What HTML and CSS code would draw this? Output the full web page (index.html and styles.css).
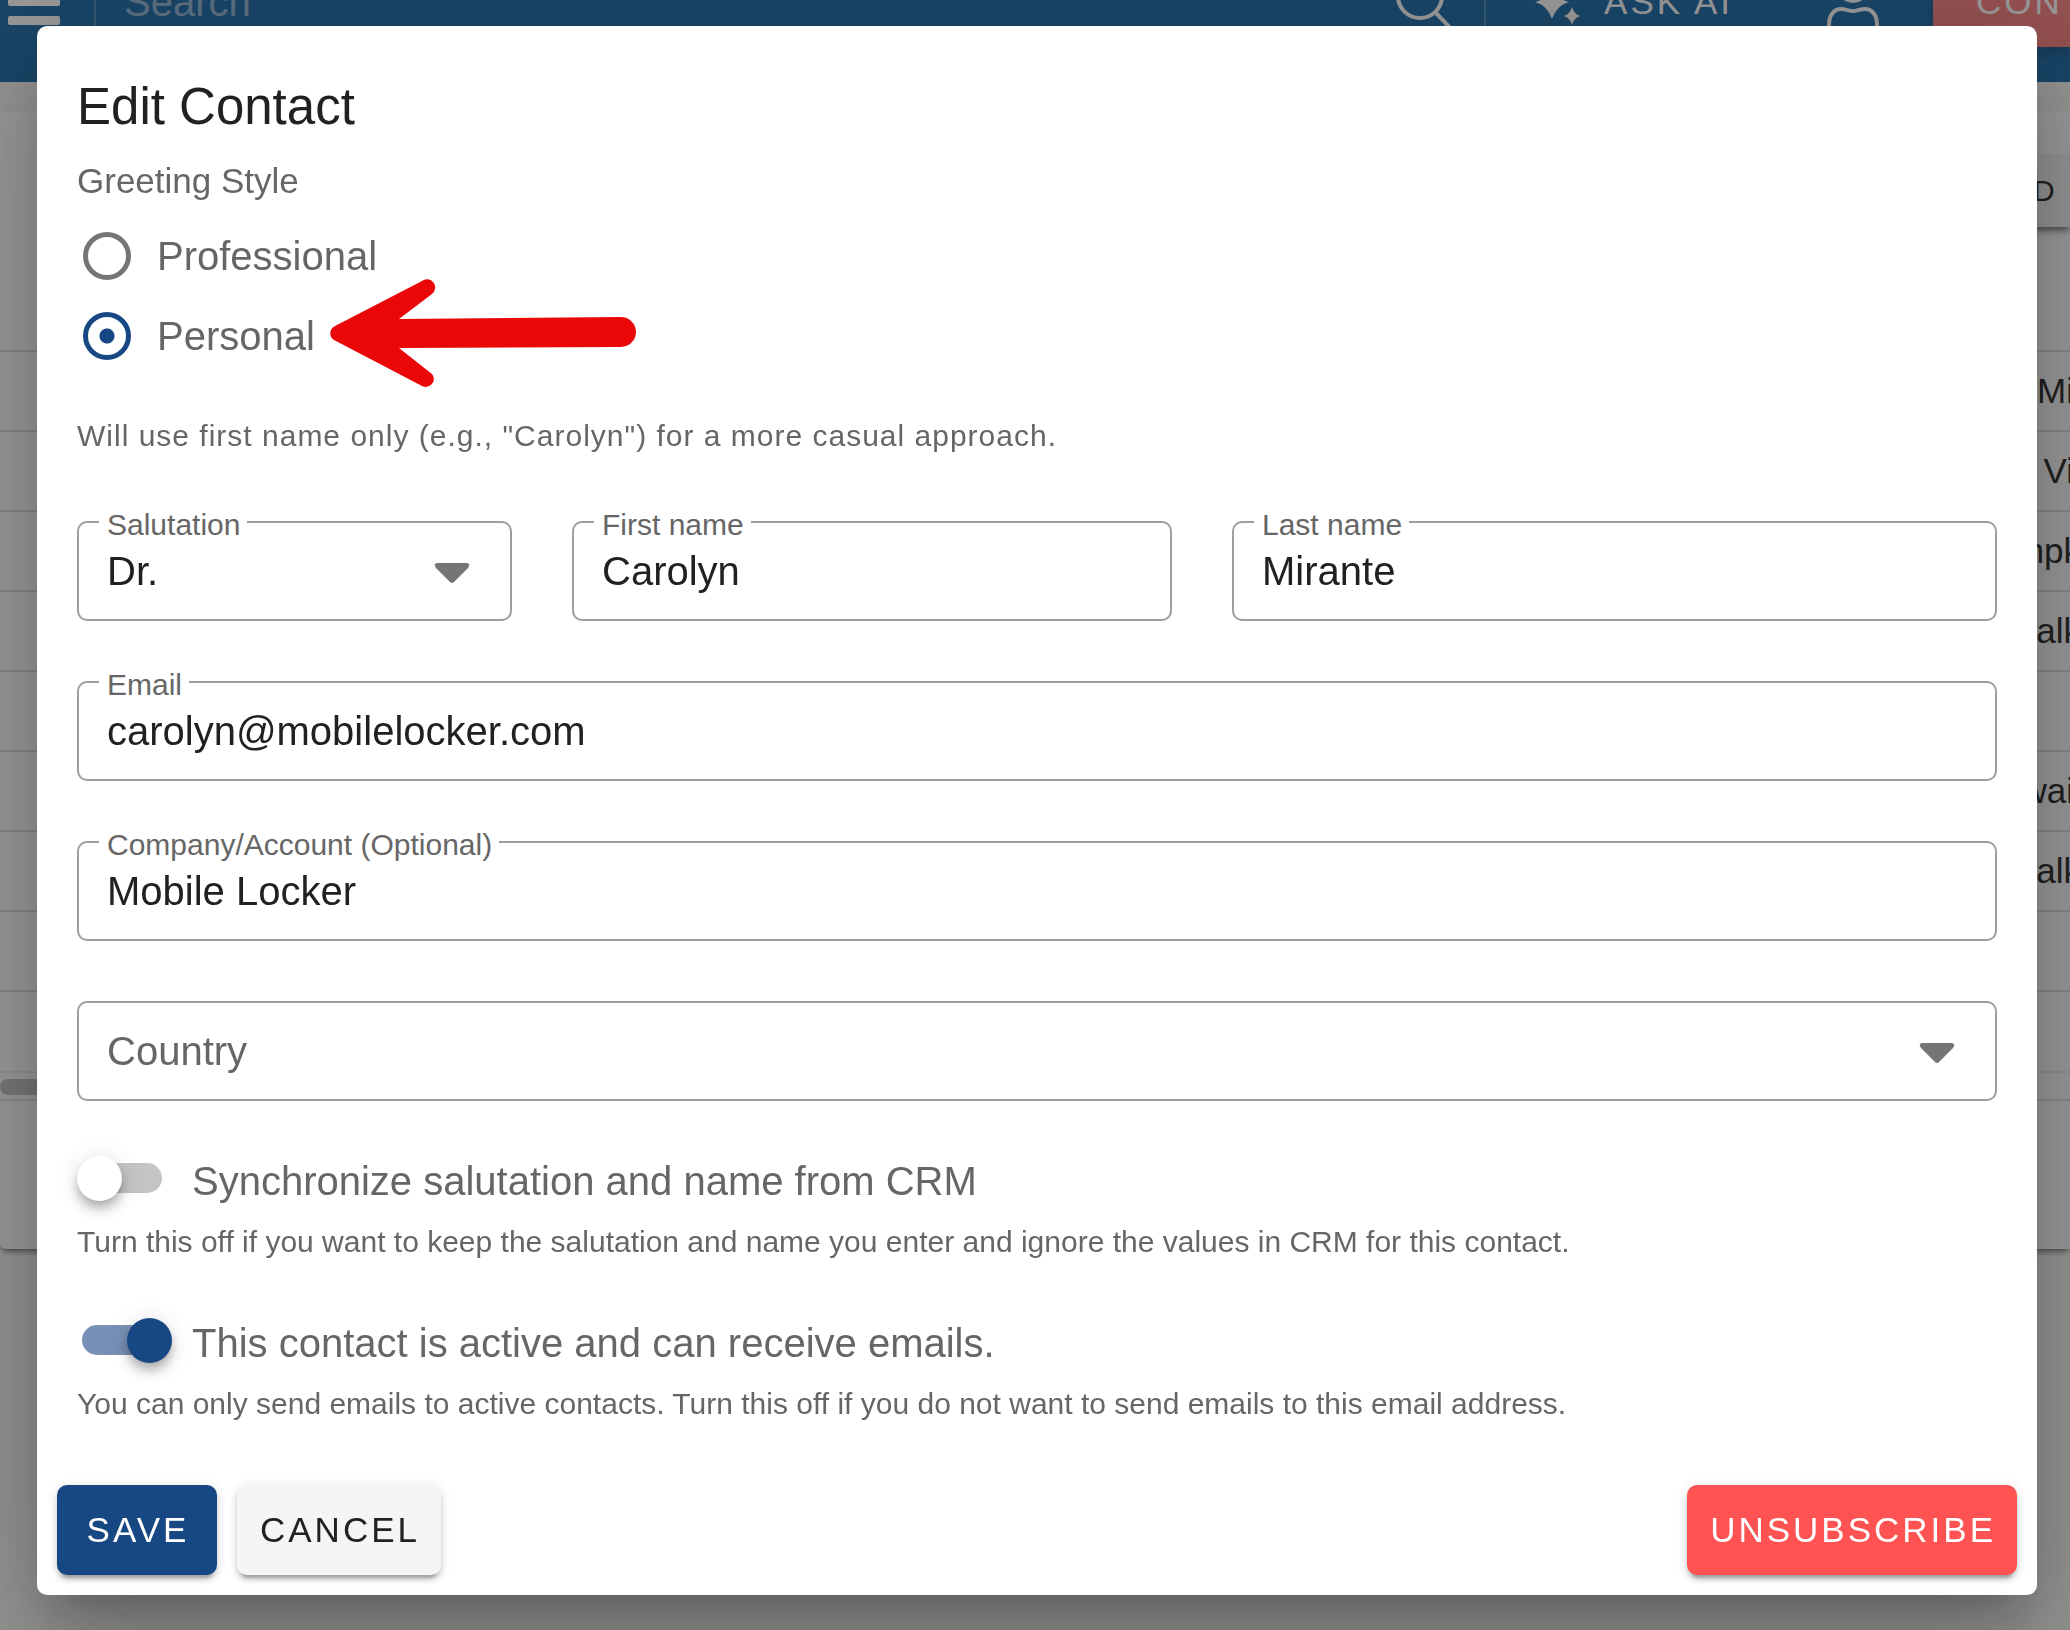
FILE: index.html
```html
<!DOCTYPE html>
<html lang="en">
<head>
<meta charset="utf-8">
<meta name="viewport" content="width=device-width, initial-scale=1">
<title>Edit Contact</title>
<link rel="stylesheet" href="styles.css">
</head>
<body>
<div class="app">
  <header class="topbar">
    <button class="topbar__menu" type="button" aria-label="Menu">
      <svg width="60" height="60" viewBox="0 0 60 60"><g fill="#fff"><rect x="4" y="6" width="52" height="8" rx="2"/><rect x="4" y="25" width="52" height="9" rx="2"/><rect x="4" y="44" width="52" height="9" rx="2"/></g></svg>
    </button>
    <span class="topbar__rule"></span>
    <input class="topbar__search" type="search" placeholder="Search" aria-label="Search">
    <svg class="topbar__lens" width="60" height="60" viewBox="0 0 60 60" fill="none" stroke="#fff" stroke-width="4"><circle cx="26" cy="24" r="22"/><path d="M42 41L62 62"/></svg>
    <span class="topbar__rule"></span>
    <button class="topbar__ask" type="button">
      <svg width="50" height="50" viewBox="0 0 50 50" fill="#fff"><path d="M18 8Q22 22 35 25Q22 29 18 42Q14 29 1 25Q14 22 18 8Z"/><path d="M38 30Q40 37 46 39Q40 41 38 48Q36 41 30 39Q36 37 38 30Z"/></svg>
      ASK AI
    </button>
    <svg class="topbar__user" width="60" height="70" viewBox="0 0 60 70" fill="none" stroke="#fff" stroke-width="4"><circle cx="30" cy="20" r="14"/><path d="M6 66V58C6 48 11 42 18 42C23 42 26 44 30 44C34 44 37 42 42 42C49 42 54 48 54 58V66Z"/></svg>
    <button class="topbar__cta" type="button">CON</button>
  </header>
  <main class="sheet">
    <div class="sheet__bar"><button class="sheet__button" type="button">D C</button></div>
    <table class="contacts">
      <tbody>
        <tr><td>Mi</td></tr>
        <tr><td>Vi</td></tr>
        <tr><td class="contacts__cut">mpk</td></tr>
        <tr><td class="contacts__cut">alk</td></tr>
        <tr><td></td></tr>
        <tr><td>wai</td></tr>
        <tr><td class="contacts__cut">alk</td></tr>
        <tr><td></td></tr>
        <tr><td></td></tr>
      </tbody>
    </table>
    <div class="sheet__scroll"><span class="sheet__thumb"></span></div>
    <div class="sheet__footer"></div>
  </main>
</div>

<div class="overlay">
  <form class="dialog" role="dialog" aria-labelledby="dialog-title">
    <div class="dialog__body">
      <h1 class="dialog__title" id="dialog-title">Edit Contact</h1>
      <div class="greeting" role="radiogroup" aria-labelledby="greeting-label">
        <p class="greeting__label" id="greeting-label">Greeting Style</p>
        <label class="radio"><input class="radio__input" type="radio" name="greeting">Professional</label>
        <label class="radio"><input class="radio__input" type="radio" name="greeting" checked>Personal</label>
        <svg class="greeting__arrow" width="312" height="112" viewBox="0 0 312 112"><path fill="#ea0707" d="M8 48L95 3A8 8 0 0 1 105 16L72 41L294 39A15 15 0 0 1 294 69L72 70L105 96A8 8 0 0 1 95 108L7 62A8 8 0 0 1 8 48Z"/></svg>
      </div>
      <p class="greeting-note">Will use first name only (e.g., "Carolyn") for a more casual approach.</p>

      <div class="fields">
        <div class="field field--3">
          <select class="field__control" id="salutation"><option>Dr.</option></select>
          <label class="field__label" for="salutation">Salutation</label>
          <svg class="field__caret" width="36" height="20" viewBox="0 0 36 20"><path fill="#757575" d="M3 0H33Q37 1 34 5L20 19Q18 21 16 19L2 5Q-1 1 3 0Z"/></svg>
        </div>
        <div class="field field--4">
          <input class="field__control" id="first" type="text" value="Carolyn">
          <label class="field__label" for="first">First name</label>
        </div>
        <div class="field field--5">
          <input class="field__control" id="last" type="text" value="Mirante">
          <label class="field__label" for="last">Last name</label>
        </div>
        <div class="field">
          <input class="field__control" id="email" type="email" value="carolyn@mobilelocker.com">
          <label class="field__label" for="email">Email</label>
        </div>
        <div class="field">
          <input class="field__control" id="company" type="text" value="Mobile Locker">
          <label class="field__label" for="company">Company/Account (Optional)</label>
        </div>
        <div class="field">
          <select class="field__control" id="country"><option></option></select>
          <label class="field__label field__label--empty" for="country">Country</label>
          <svg class="field__caret" width="36" height="20" viewBox="0 0 36 20"><path fill="#757575" d="M3 0H33Q37 1 34 5L20 19Q18 21 16 19L2 5Q-1 1 3 0Z"/></svg>
        </div>
      </div>

      <div class="settings">
        <div class="setting">
          <label class="switch"><input class="switch__input" type="checkbox"><span>Synchronize salutation and name from CRM</span></label>
          <p class="setting__hint">Turn this off if you want to keep the salutation and name you enter and ignore the values in CRM for this contact.</p>
        </div>
        <div class="setting">
          <label class="switch"><input class="switch__input" type="checkbox" checked><span>This contact is active and can receive emails.</span></label>
          <p class="setting__hint">You can only send emails to active contacts. Turn this off if you do not want to send emails to this email address.</p>
        </div>
      </div>
    </div>
    <div class="dialog__actions">
      <button class="button button--primary" type="submit">SAVE</button>
      <button class="button" type="button">CANCEL</button>
      <button class="button button--danger" type="button">UNSUBSCRIBE</button>
    </div>
  </form>
</div>
</body>
</html>
```
FILE: styles.css
```css
* {
  box-sizing: border-box;
}

body {
  margin: 0;
  min-height: 100vh;
  overflow: hidden;
  background: #f8f7f3;
  color: #212121;
  font-family: "Liberation Sans", Arial, sans-serif;
}

button,
input,
select {
  margin: 0;
  font-family: inherit;
}

h1,
p {
  margin: 0;
  font-weight: 400;
}

/* Page behind the dialog, scrolled so the bar is partly out of view */
.app {
  height: 100vh;
  overflow: hidden;
}

.topbar {
  display: flex;
  align-items: center;
  height: 160px;
  margin-top: -78px;
  padding-left: 4px;
  background: #1767a6;
  color: #fff;
}

.topbar svg {
  display: block;
  flex: none;
}

.topbar__menu {
  padding: 0;
  border: 0;
  background: none;
}

.topbar__rule {
  flex: none;
  width: 2px;
  height: 90px;
  background: #4a86b8;
}

.topbar__menu + .topbar__rule {
  margin-left: 30px;
}

.topbar__search {
  flex: 1;
  min-width: 0;
  padding: 0 28px;
  border: 0;
  background: none;
  color: #fff;
  font-size: 40px;
}

.topbar__search::placeholder {
  color: #8fb4d6;
  opacity: 1;
}

.topbar__lens {
  margin-right: 30px;
}

.topbar__ask {
  display: flex;
  align-items: center;
  gap: 20px;
  margin-left: 48px;
  padding: 0;
  border: 0;
  background: none;
  color: #fff;
  font-size: 35px;
  letter-spacing: 3px;
  white-space: nowrap;
}

.topbar__user {
  margin: 0 50px 0 90px;
}

.topbar__cta {
  flex: none;
  width: 137px;
  height: 90px;
  padding: 0 0 0 43px;
  border: 0;
  background: #f97c7c;
  box-shadow: 0 8px 10px rgba(0, 0, 0, 0.2);
  color: #fff;
  font-size: 35px;
  letter-spacing: 3px;
  text-align: left;
}

.sheet {
  margin-top: 30px;
  border-radius: 0 0 0 6px;
  background: #fff;
  box-shadow: 0 4px 6px -2px rgba(0, 0, 0, 0.6);
  overflow: hidden;
}

.sheet__bar {
  display: flex;
  justify-content: flex-end;
  height: 238px;
  padding-top: 42px;
}

.sheet__button {
  width: 90px;
  height: 73px;
  padding: 0 0 0 53px;
  border: 0;
  background: #f5f5f5;
  box-shadow: 0 5px 6px -1px rgba(0, 0, 0, 0.5);
  color: #212121;
  font-size: 30px;
  letter-spacing: 3px;
  text-align: left;
  white-space: nowrap;
}

.contacts {
  width: calc(100% + 11px);
  border-collapse: collapse;
  font-size: 35px;
  line-height: 40px;
  text-align: right;
}

.contacts td {
  height: 80px;
  padding: 0 7px 0 0;
  border-top: 2px solid #dedede;
}

.contacts .contacts__cut {
  padding-right: 0;
}

.sheet__scroll {
  height: 30px;
  padding-top: 6px;
  border-top: 2px solid #eee;
  border-bottom: 2px solid #dedede;
}

.sheet__thumb {
  display: block;
  width: 40%;
  height: 16px;
  border-radius: 8px;
  background: #c0c0c0;
}

.sheet__footer {
  height: 148px;
}

.overlay {
  position: fixed;
  inset: 0;
  padding: 26px 33px 35px 37px;
  background: rgba(33, 33, 33, 0.46);
  overflow: hidden;
}

.dialog {
  border-radius: 10px;
  background: #fff;
  box-shadow:
    0 28px 38px -18px rgba(0, 0, 0, 0.2),
    0 60px 95px 8px rgba(0, 0, 0, 0.14),
    0 22px 115px 20px rgba(0, 0, 0, 0.12);
}

.dialog__body {
  padding: 41px 40px 0;
}

.dialog__title {
  font-size: 51px;
  line-height: 80px;
}

.greeting {
  position: relative;
  display: grid;
  gap: 20px;
  margin-top: 14px;
  color: #666;
}

.greeting__label {
  margin-bottom: 5px;
  font-size: 35px;
  line-height: 40px;
}

.greeting__arrow {
  position: absolute;
  left: 250px;
  top: 117px;
}

.radio {
  display: flex;
  align-items: center;
  gap: 26px;
  height: 60px;
  padding-left: 6px;
  font-size: 40px;
}

.radio__input {
  appearance: none;
  width: 48px;
  height: 48px;
  border: 5px solid #757575;
  border-radius: 50%;
}

.radio__input:checked {
  border-color: #184884;
  background: radial-gradient(circle, #184884 7px, transparent 8px);
}

.greeting-note {
  margin-top: 45px;
  color: #666;
  font-size: 30px;
  line-height: 50px;
  letter-spacing: 1px;
}

.fields {
  display: grid;
  grid-template-columns: repeat(12, 1fr);
  gap: 60px;
  margin-top: 60px;
}

.field {
  position: relative;
  grid-column: span 12;
  min-width: 0;
}

.field--3 {
  grid-column: span 3;
}

.field--4 {
  grid-column: span 4;
}

.field--5 {
  grid-column: span 5;
}

.field__control {
  appearance: none;
  display: block;
  width: 100%;
  height: 100px;
  padding: 0 28px;
  border: 2px solid #9e9e9e;
  border-radius: 10px;
  background: #fff;
  color: #212121;
  font-size: 40px;
}

.field__label {
  position: absolute;
  left: 22px;
  top: -16px;
  padding: 0 7px 0 8px;
  background: #fff;
  color: #666;
  font-size: 30px;
  line-height: 40px;
  pointer-events: none;
}

.field__label--empty {
  top: 30px;
  font-size: 40px;
}

.field__caret {
  position: absolute;
  right: 42px;
  top: 42px;
  pointer-events: none;
}

.settings {
  display: grid;
  gap: 56px;
  margin-top: 55px;
  color: #666;
}

.setting__hint {
  margin-top: 16px;
  font-size: 30px;
  line-height: 40px;
}

.switch {
  display: flex;
  gap: 20px;
  font-size: 40px;
  line-height: 50px;
}

.switch__input {
  appearance: none;
  position: relative;
  flex: none;
  width: 95px;
  height: 45px;
}

.switch__input::before,
.switch__input::after {
  content: "";
  position: absolute;
}

.switch__input::before {
  left: 5px;
  top: 7px;
  width: 80px;
  height: 30px;
  border-radius: 15px;
  background: #c4c4c4;
}

.switch__input::after {
  left: 0;
  top: 0;
  width: 45px;
  height: 45px;
  border-radius: 50%;
  background: #fff;
  box-shadow:
    0 5px 10px -2px rgba(0, 0, 0, 0.2),
    0 10px 12px rgba(0, 0, 0, 0.14),
    0 2px 25px rgba(0, 0, 0, 0.12);
}

.switch__input:checked::before {
  background: #7890b6;
}

.switch__input:checked::after {
  left: 50px;
  background: #184884;
}

.dialog__actions {
  display: flex;
  gap: 20px;
  padding: 61px 20px 20px;
}

.button {
  min-width: 160px;
  height: 90px;
  padding: 0 21px 0 23px;
  border: 0;
  border-radius: 10px;
  background: #f5f5f5;
  box-shadow:
    0 8px 3px -5px rgba(0, 0, 0, 0.2),
    0 5px 5px rgba(0, 0, 0, 0.14),
    0 2px 12px rgba(0, 0, 0, 0.12);
  color: #212121;
  font-size: 35px;
  letter-spacing: 3px;
}

.button--primary {
  background: #184884;
  color: #fff;
}

.button--danger {
  margin-left: auto;
  background: #ff5252;
  color: #fff;
}
```
